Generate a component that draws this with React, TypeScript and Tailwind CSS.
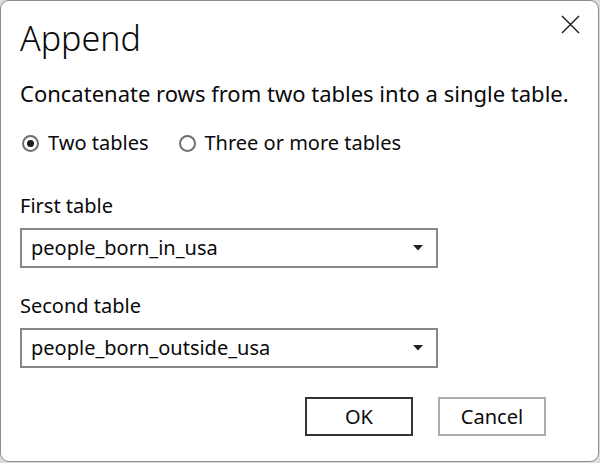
import React from "react";

function Radio({ checked, label }: { checked: boolean; label: string }) {
  return (
    <label className="flex items-center gap-[9px]">
      <span className="flex h-[17px] w-[17px] items-center justify-center rounded-full border-2 border-[#6e6e6e] bg-white">
        {checked && <span className="h-[7px] w-[7px] rounded-full bg-[#1a1a1a]" />}
      </span>
      <span className="leading-[28px]">{label}</span>
    </label>
  );
}

function Select({ value }: { value: string }) {
  return (
    <div className="flex h-[40px] w-[418px] items-center justify-between border-2 border-[#878787] bg-white pl-[9px] pr-[13px]">
      <span className="text-[20px] leading-[28px]">{value}</span>
      <svg width="10" height="6" viewBox="0 0 10 6">
        <path d="M0 0 L10 0 L5 5.5 Z" fill="#222" />
      </svg>
    </div>
  );
}

export default function App() {
  return (
    <div className="h-[463px] w-[600px] bg-[#dcdcdc]" style={{ fontFamily: '"Noto Sans", "Open Sans", sans-serif' }}>
      <div className="relative flex h-[462px] w-[599px] flex-col rounded-[9px] border border-[#8c8c8c] bg-white px-[19px] text-[#0a0a0a]">
        <button className="absolute right-[18px] top-[13px] flex h-[20px] w-[20px] items-center justify-center">
          <svg width="19" height="19" viewBox="0 0 19 19">
            <path d="M1 1 L18 18 M18 1 L1 18" stroke="#1a1a1a" strokeWidth="1.4" fill="none" />
          </svg>
        </button>
        <div className="pt-[17px] text-[34px] font-light leading-[40px]">Append</div>
        <div className="mt-[20px] text-[22px] leading-[30px]">Concatenate rows from two tables into a single table.</div>
        <div className="mt-[21px] flex items-center gap-[30px] pl-[2px] text-[20px]">
          <Radio checked label="Two tables" />
          <Radio checked={false} label="Three or more tables" />
        </div>
        <div className="mt-[35px] text-[20px] leading-[28px]">First table</div>
        <div className="mt-[8px]">
          <Select value="people_born_in_usa" />
        </div>
        <div className="mt-[24px] text-[20px] leading-[28px]">Second table</div>
        <div className="mt-[8px]">
          <Select value="people_born_outside_usa" />
        </div>
        <div className="mt-[29px] flex justify-end gap-[25px] pr-[33px]">
          <button className="h-[39px] w-[108px] border-2 border-[#333] bg-white text-[20px] leading-[28px]">OK</button>
          <button className="h-[39px] w-[108px] border-2 border-[#adadad] bg-white text-[20px] leading-[28px]">Cancel</button>
        </div>
      </div>
    </div>
  );
}
